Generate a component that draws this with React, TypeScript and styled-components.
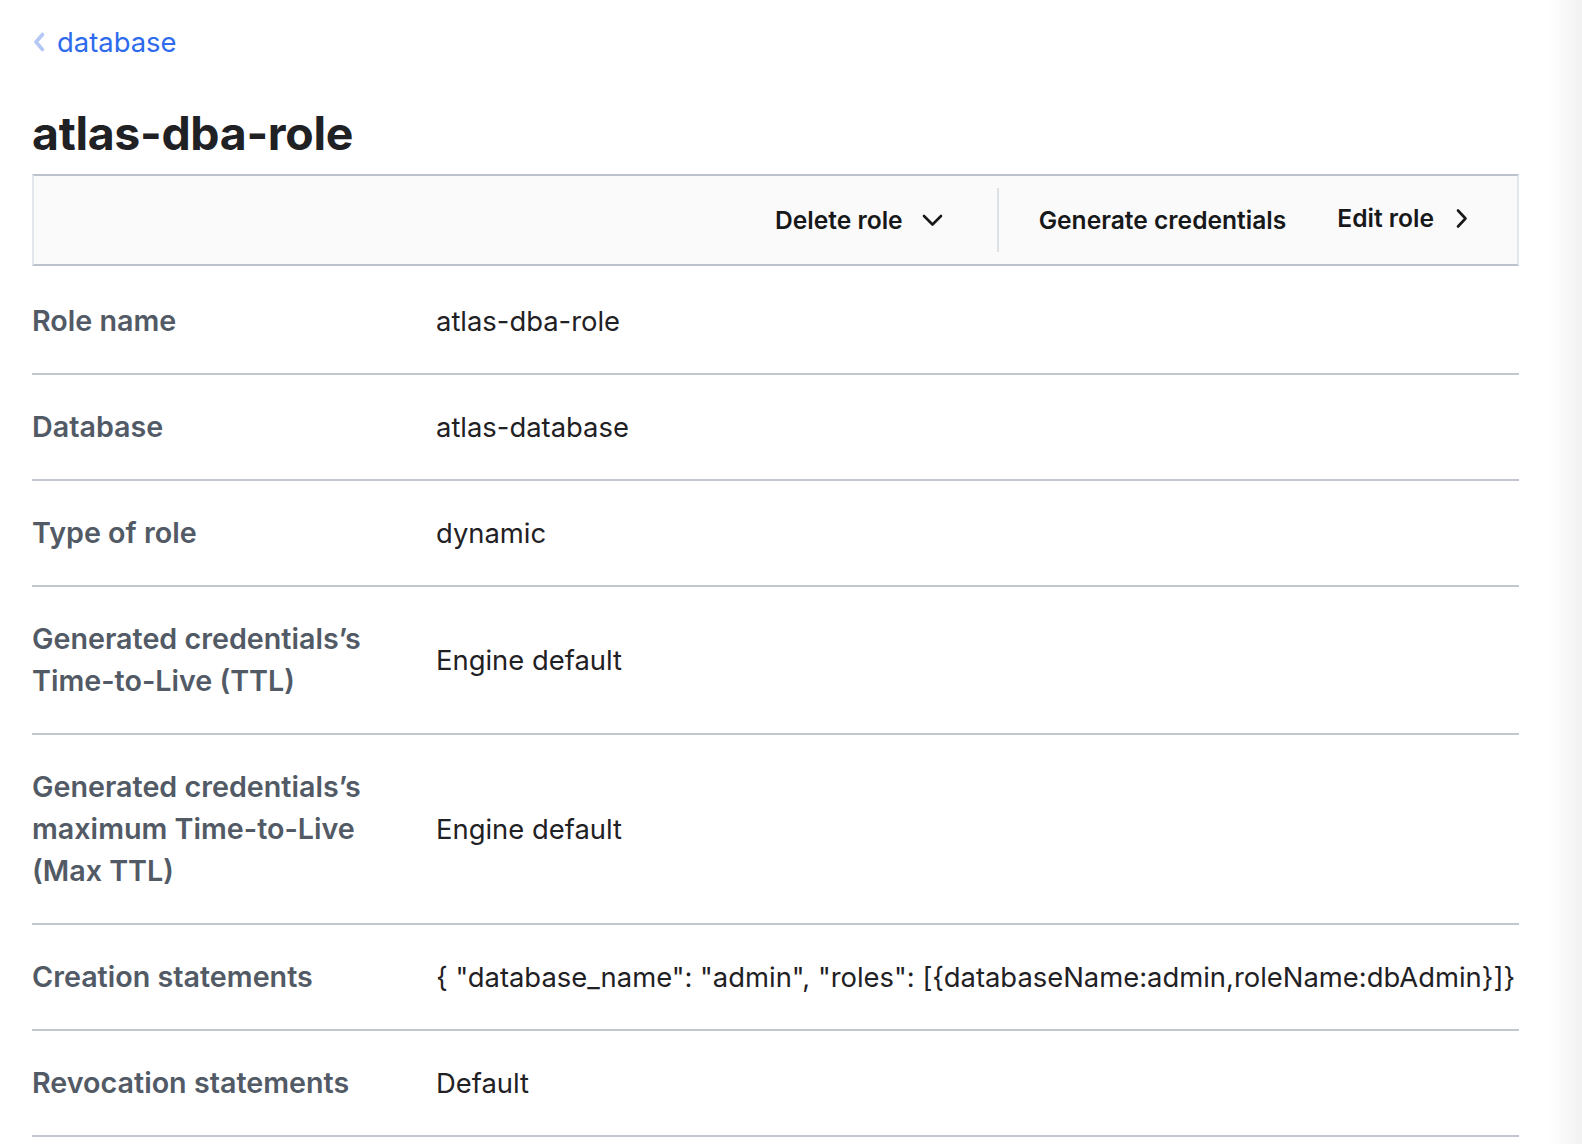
import React from "react";
import styled, { createGlobalStyle } from "styled-components";

const GlobalStyle = createGlobalStyle`
  html {
    background: linear-gradient(to right, #ffffff 1548px, #f2f2f2 1582px);
    min-height: 100%;
  }
  body {
    margin: 0;
    font-family: Inter, "Noto Sans", "Liberation Sans", sans-serif;
    color: #1f2124;
    -webkit-font-smoothing: antialiased;
  }
`;

const Page = styled.main`
  width: 1487px;
  margin-left: 32px;
  padding-bottom: 40px;
`;

const Breadcrumb = styled.nav`
  display: flex;
  align-items: center;
  gap: 11px;
  padding-top: 26px;
  height: 32px;
  line-height: 32px;
`;

const BackChevron = styled.svg`
  width: 14px;
  height: 22px;
  flex: none;
`;

const CrumbLink = styled.a`
  font-size: 27.4px;
  color: #2e6bec;
  text-decoration: none;
`;

const Title = styled.h1`
  margin: 50px 0 16px;
  font-size: 46.4px;
  line-height: 50px;
  font-weight: 700;
  letter-spacing: -0.3px;
  color: #1f2124;
`;

const Toolbar = styled.div`
  display: flex;
  align-items: center;
  justify-content: flex-end;
  height: 88px;
  background: #fafafa;
  border-top: 2px solid #bcc2cc;
  border-bottom: 2px solid #bcc2cc;
  border-left: 2px solid #e3e6ea;
  border-right: 2px solid #e3e6ea;
  padding-right: 49px;
`;

const ToolButton = styled.button<{ $lift?: boolean; $gap?: number }>`
  display: flex;
  align-items: center;
  gap: ${(p) => p.$gap ?? 21}px;
  border: 0;
  background: none;
  padding: 0;
  margin-left: ${(p) => (p.$lift ? "51px" : "0")};
  font-family: Inter, "Noto Sans", "Liberation Sans", sans-serif;
  font-size: 24.6px;
  font-weight: 600;
  color: #17181a;
  cursor: pointer;
  transform: ${(p) => (p.$lift ? "translateY(-2px)" : "none")};
`;

const Separator = styled.span`
  width: 2px;
  height: 64px;
  background: #dde0e5;
  margin: 0 40px 0 54px;
`;

const Icon = styled.svg`
  flex: none;
`;

const Details = styled.dl`
  margin: 3px 0 0;
`;

const Row = styled.div`
  display: grid;
  grid-template-columns: 404px 1fr;
  align-items: center;
  padding: 31px 0 31px;
  border-bottom: 2px solid #c2c7cf;
`;

const Label = styled.dt`
  font-size: 28.7px;
  line-height: 42px;
  font-weight: 600;
  color: #525a66;
  padding-right: 10px;
  white-space: nowrap;
`;

const Value = styled.dd`
  margin: 0;
  font-size: 27.4px;
  line-height: 42px;
  color: #1f2124;
  white-space: nowrap;
`;

const rows: { label: React.ReactNode; value: string }[] = [
  { label: "Role name", value: "atlas-dba-role" },
  { label: "Database", value: "atlas-database" },
  { label: "Type of role", value: "dynamic" },
  {
    label: (
      <>
        Generated credentials’s
        <br />
        Time-to-Live (TTL)
      </>
    ),
    value: "Engine default",
  },
  {
    label: (
      <>
        Generated credentials’s
        <br />
        maximum Time-to-Live
        <br />
        (Max TTL)
      </>
    ),
    value: "Engine default",
  },
  {
    label: "Creation statements",
    value:
      '{ "database_name": "admin", "roles": [{databaseName:admin,roleName:dbAdmin}]}',
  },
  { label: "Revocation statements", value: "Default" },
];

export default function App() {
  return (
    <>
      <GlobalStyle />
      <Page>
        <Breadcrumb>
          <BackChevron viewBox="0 0 14 22">
            <path
              d="M10.5 3.5 L4 11 L10.5 18.5"
              fill="none"
              stroke="#b5c8f5"
              strokeWidth="3.6"
              strokeLinecap="round"
              strokeLinejoin="round"
            />
          </BackChevron>
          <CrumbLink href="#">database</CrumbLink>
        </Breadcrumb>
        <Title>atlas-dba-role</Title>
        <Toolbar>
          <ToolButton $gap={19}>
            Delete role
            <Icon width="21" height="13" viewBox="0 0 21 13">
              <path
                d="M2 2 L10.5 10.5 L19 2"
                fill="none"
                stroke="#17181a"
                strokeWidth="2.6"
                strokeLinecap="round"
                strokeLinejoin="round"
              />
            </Icon>
          </ToolButton>
          <Separator />
          <ToolButton>Generate credentials</ToolButton>
          <ToolButton $lift $gap={21}>
            Edit role
            <Icon width="13" height="21" viewBox="0 0 13 21">
              <path
                d="M3 2.5 L10.5 10.5 L3 18.5"
                fill="none"
                stroke="#17181a"
                strokeWidth="2.6"
                strokeLinecap="round"
                strokeLinejoin="round"
              />
            </Icon>
          </ToolButton>
        </Toolbar>
        <Details>
          {rows.map((r, i) => (
            <Row key={i}>
              <Label>{r.label}</Label>
              <Value>{r.value}</Value>
            </Row>
          ))}
        </Details>
      </Page>
    </>
  );
}
